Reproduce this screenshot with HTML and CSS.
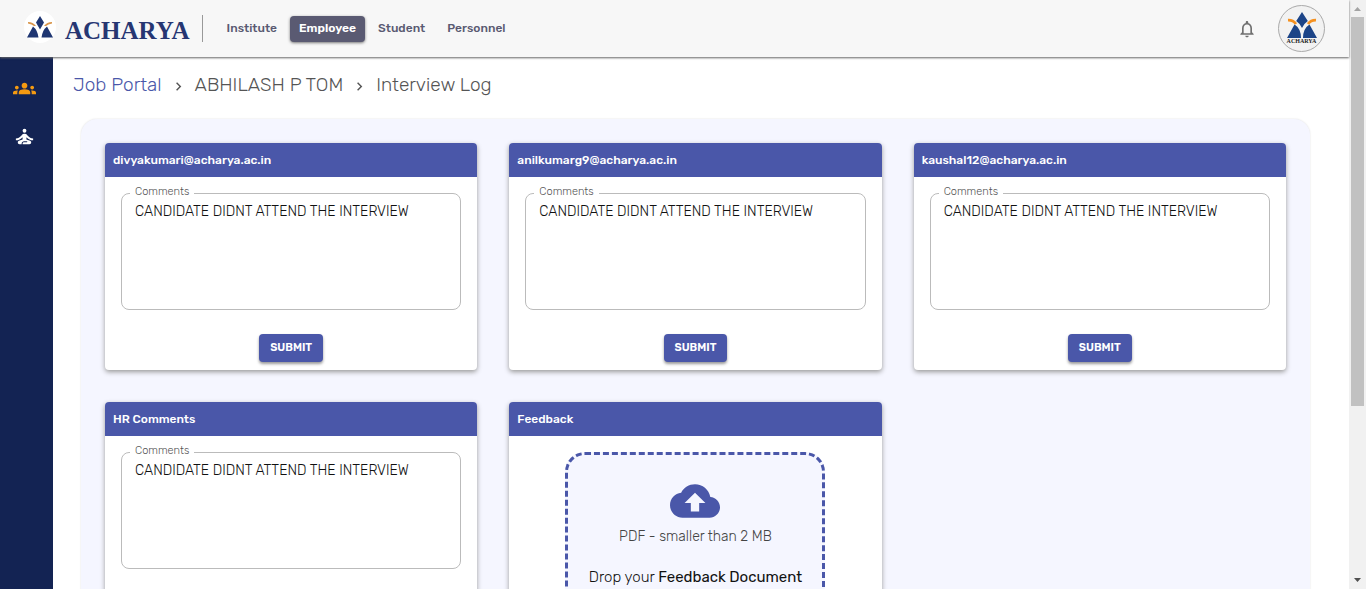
FILE: index.html
```html
<!DOCTYPE html>
<html lang="en">
<head>
<meta charset="utf-8">
<title>Interview Log</title>
<link rel="stylesheet" href="styles.css">
</head>
<body>
<div class="window">
  <div class="app">
    <header class="topbar">
      <a class="brand" href="#">
        <svg class="brand-mark" viewBox="0 0 32 32">
          <circle cx="16" cy="14" r="16" fill="#fff"/>
          <path fill="#d9954a" d="M4 9Q9 9 12 13L10 13Q8 11 4 10.500ZM28 9Q23 9 20 13L22 13Q24 11 28 10.500Z"/>
          <path fill="#1f3672" d="M16 3L20 9.500L16 16.500L12 9.500ZM9 13.500Q13.500 17 14.500 24.500H3ZM23 13.500Q18.500 17 17.500 24.500H29Z"/>
        </svg>
        <span>ACHARYA</span>
      </a>
      <nav class="tabs">
        <button>Institute</button>
        <button class="active">Employee</button>
        <button>Student</button>
        <button>Personnel</button>
      </nav>
      <button class="bell" aria-label="Notifications"><svg viewBox="0 0 24 24"><path d="M12 22c1.100 0 2-.9 2-2h-4c0 1.100.9 2 2 2zm6-6v-5c0-3.070-1.630-5.640-4.500-6.320V4c0-.83-.67-1.500-1.500-1.500s-1.500.67-1.500 1.500v.68C7.640 5.360 6 7.920 6 11v5l-2 2v1h16v-1l-2-2zm-2 1H8v-6c0-2.480 1.510-4.500 4-4.500s4 2.020 4 4.500v6z"/></svg></button>
      <button class="avatar" aria-label="Account">
        <svg viewBox="0 0 30 26">
          <path fill="none" stroke="#f59120" stroke-width="2.800" d="M1 8.200Q6 8 9 12M29 8.200Q24 8 21 12"/>
          <path fill="#1c4487" d="M15 0L20.800 9Q17 11.500 15 16Q13 11.500 9.200 9ZM7.500 12.500Q14 16.500 14 26H0ZM22.500 12.500Q16 16.500 16 26H30Z"/>
        </svg>
        <span>ACHARYA</span>
      </button>
    </header>
    <div class="body">
      <nav class="sidebar">
        <a class="current" href="#" aria-label="Groups"><svg viewBox="0 0 24 24"><path d="M12 12.750c1.630 0 3.070.39 4.240.9 1.080.48 1.760 1.560 1.760 2.730V18H6v-1.610c0-1.180.68-2.260 1.760-2.730 1.170-.52 2.610-.91 4.240-.91zM4 13c1.100 0 2-.9 2-2s-.9-2-2-2-2 .9-2 2 .9 2 2 2zm1.130 1.100c-.37-.06-.74-.1-1.130-.1-.99 0-1.930.21-2.780.58C.48 14.900 0 15.620 0 16.430V18h4.500v-1.610c0-.83.23-1.610.63-2.290zM20 13c1.100 0 2-.9 2-2s-.9-2-2-2-2 .9-2 2 .9 2 2 2zm4 3.430c0-.81-.48-1.530-1.220-1.850-.85-.37-1.790-.58-2.780-.58-.39 0-.76.04-1.130.1.4.68.63 1.460.63 2.290V18H24v-1.570zM12 6c1.660 0 3 1.340 3 3s-1.340 3-3 3-3-1.340-3-3 1.340-3 3-3z"/></svg></a>
        <a href="#" aria-label="Self improvement"><svg viewBox="0 0 24 24"><circle cx="12" cy="6" r="2"/><path d="M21 16v-2c-2.240 0-4.160-.96-5.600-2.680l-1.340-1.600c-.38-.46-.94-.72-1.530-.72h-1.050c-.59 0-1.150.26-1.530.72l-1.340 1.600C7.160 13.040 5.240 14 3 14v2c2.770 0 5.190-1.170 7-3.250V15l-3.880 1.550c-.67.27-1.120.93-1.120 1.660C5 19.200 5.800 20 6.790 20H9v-.5c0-1.380 1.120-2.500 2.500-2.500h3c.28 0 .5.22.5.5s-.22.5-.5.5h-3c-.83 0-1.500.67-1.500 1.500v.5h7.100c1 0 1.900-.7 1.900-1.790 0-.73-.45-1.390-1.120-1.660L14 15v-2.250c1.810 2.080 4.230 3.250 7 3.250z"/></svg></a>
      </nav>
      <main class="content">
        <nav class="crumbs" aria-label="Breadcrumb">
          <a href="#">Job Portal</a>
          <svg viewBox="0 0 24 24"><path d="M10 6L8.590 7.410 13.170 12l-4.580 4.590L10 18l6-6z"/></svg>
          <span>ABHILASH P TOM</span>
          <svg viewBox="0 0 24 24"><path d="M10 6L8.590 7.410 13.170 12l-4.580 4.590L10 18l6-6z"/></svg>
          <span>Interview Log</span>
        </nav>
        <section class="panel">
          <article class="card">
            <h2>divyakumari@acharya.ac.in</h2>
            <div class="card-body">
              <div class="field"><label for="c1">Comments</label><textarea id="c1">CANDIDATE DIDNT ATTEND THE INTERVIEW</textarea></div>
              <button class="submit">SUBMIT</button>
            </div>
          </article>
          <article class="card">
            <h2>anilkumarg9@acharya.ac.in</h2>
            <div class="card-body">
              <div class="field"><label for="c2">Comments</label><textarea id="c2">CANDIDATE DIDNT ATTEND THE INTERVIEW</textarea></div>
              <button class="submit">SUBMIT</button>
            </div>
          </article>
          <article class="card">
            <h2>kaushal12@acharya.ac.in</h2>
            <div class="card-body">
              <div class="field"><label for="c3">Comments</label><textarea id="c3">CANDIDATE DIDNT ATTEND THE INTERVIEW</textarea></div>
              <button class="submit">SUBMIT</button>
            </div>
          </article>
          <article class="card">
            <h2>HR Comments</h2>
            <div class="card-body">
              <div class="field"><label for="c4">Comments</label><textarea id="c4">CANDIDATE DIDNT ATTEND THE INTERVIEW</textarea></div>
            </div>
          </article>
          <article class="card">
            <h2>Feedback</h2>
            <div class="card-body">
              <button class="dropzone">
                <svg viewBox="0 0 24 24"><path d="M19.350 10.040C18.670 6.590 15.640 4 12 4 9.110 4 6.600 5.640 5.350 8.040 2.340 8.360 0 10.910 0 14c0 3.310 2.690 6 6 6h13c2.760 0 5-2.240 5-5 0-2.640-2.050-4.780-4.650-4.960zM14 13v4h-4v-4H7l5-5 5 5h-3z"/></svg>
                <span class="hint">PDF - smaller than 2 MB</span>
                <span class="drop">Drop your <strong>Feedback Document</strong></span>
              </button>
            </div>
          </article>
        </section>
      </main>
    </div>
  </div>
  <div class="scrollbar" aria-hidden="true">
    <svg viewBox="0 0 17 17"><path fill="#a3a3a3" d="M5 11L8.500 7L12 11Z"/></svg>
    <div class="track"><div class="thumb"></div></div>
    <svg viewBox="0 0 17 17"><path fill="#505050" d="M5 6L8.500 10L12 6Z"/></svg>
  </div>
</div>
</body>
</html>
```
FILE: styles.css
```css
* { box-sizing: border-box; }
body { margin: 0; font-family: Rubik, Roboto, "Liberation Sans", sans-serif; color: #212121; background: #fff; }
button { font: inherit; border: 0; cursor: pointer; }
a { text-decoration: none; }
svg { display: block; fill: currentColor; flex: none; }

.window { display: flex; height: 100vh; overflow: hidden; }
.app { flex: 1; min-width: 0; display: flex; flex-direction: column; }

.topbar { flex: none; height: 57px; display: flex; align-items: center; padding-right: 24px; background: #f7f7f7; box-shadow: 0 1px 2px #666; z-index: 1; }
.brand { display: flex; align-items: center; gap: 9px; height: 27px; padding: 0 12px 0 24px; border-right: 1px solid #999; color: #263672; font-family: "Liberation Serif", serif; font-size: 25px; line-height: 32px; font-weight: 700; }
.brand-mark { width: 32px; height: 32px; overflow: visible; }
.brand span { padding-top: 4px; }
.tabs { display: flex; gap: 4px; margin-left: 15px; flex: 1; }
.tabs button { height: 26px; padding: 0 9px 2px; border-radius: 4px; background: none; color: #5a5a72; font-size: 12px; font-weight: 500; }
.tabs .active { background: #5a5a72; color: #fff; font-weight: 600; box-shadow: 0 1px 3px #777; }
.bell { padding: 0; margin-right: 21px; background: none; color: #707070; }
.bell svg { width: 20px; height: 20px; }
.avatar { width: 47px; height: 47px; padding: 0; border: 1px solid #aaa; border-radius: 50%; background: #f2f2f2; display: flex; flex-direction: column; align-items: center; justify-content: center; color: #222; font: 700 6px/7px "Liberation Serif", serif; }
.avatar svg { width: 30px; height: 26px; }

.body { flex: 1; min-height: 0; display: flex; }
.sidebar { width: 53px; flex: none; padding: 20px 0 0 13px; display: flex; flex-direction: column; gap: 25px; background: #132353; }
.sidebar a { color: #fff; }
.sidebar .current { color: #f59a11; }
.sidebar svg { width: 23px; height: 23px; }

.content { flex: 1; min-width: 0; padding: 16px 39px 0 28px; overflow: hidden; }
.crumbs { display: flex; align-items: center; gap: 8px; height: 26px; margin-left: -8px; font-size: 19px; line-height: 24px; font-weight: 300; color: #555; }
.crumbs a, .crumbs span { padding-bottom: 2px; }
.crumbs a { color: #4a57a9; }
.crumbs svg { width: 17px; height: 17px; }
.panel { margin-top: 20px; padding: 24px; display: grid; grid-template-columns: repeat(3, 1fr); gap: 32px; border-radius: 16px; background: #f5f6ff; box-shadow: 0 0 2px #ddd; }
.card { border-radius: 4px; overflow: hidden; background: #fff; box-shadow: 0 2px 5px #999; }
.card h2 { margin: 0; padding: 0 8px; background: #4a57a9; color: #fff; font-size: 12px; line-height: 34px; font-weight: 500; }
.card-body { padding: 16px 16px 8px; display: flex; flex-direction: column; align-items: center; gap: 24px; }
.field { position: relative; width: 100%; height: 117px; }
.field label { position: absolute; left: 9px; top: -8px; padding: 0 5px; background: #fff; color: #555; font-size: 11px; line-height: 13px; font-weight: 300; }
.field textarea { display: block; width: 100%; height: 100%; padding: 8px 13px; border: 1px solid #bbb; border-radius: 8px; resize: none; background: none; color: #111; font: inherit; font-size: 14px; font-weight: 300; line-height: 20px; }
.submit { height: 28px; padding: 0 11px 2px; border-radius: 4px; background: #4a57a9; color: #fff; font-size: 11px; font-weight: 600; box-shadow: 0 2px 3px #999; }
.dropzone { width: 260px; padding: 21px 0; border: 3px dashed #4a57a9; border-radius: 20px; background: #f5f6ff; display: flex; flex-direction: column; align-items: center; color: #111; font-size: 14px; line-height: 22px; font-weight: 300; }
.dropzone svg { width: 50px; height: 50px; color: #4a57a9; }
.hint { color: #444; }
.drop { margin-top: 18px; font-size: 15px; }
.drop strong { font-weight: 400; }

.scrollbar { width: 17px; flex: none; display: flex; flex-direction: column; background: #f1f1f1; }
.scrollbar svg { width: 17px; height: 17px; }
.track { flex: 1; padding: 0 2px; }
.thumb { height: 70%; background: #c1c1c1; }
```
